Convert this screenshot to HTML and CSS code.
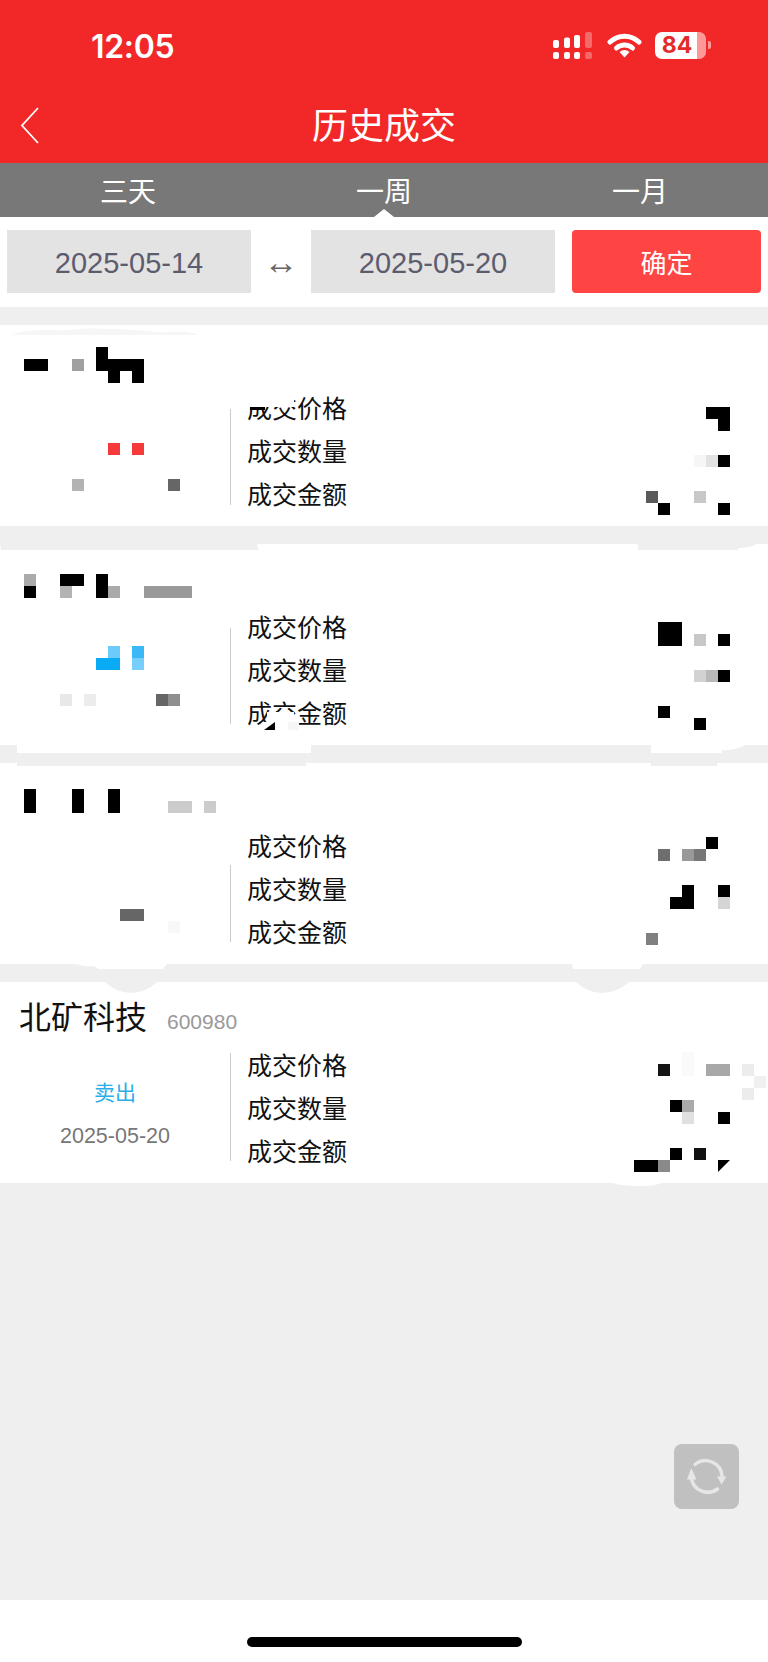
FILE: index.html
```html
<!DOCTYPE html>
<html lang="zh-CN">
<head>
<meta charset="UTF-8">
<meta name="viewport" content="width=device-width, initial-scale=1.0">
<title>历史成交</title>
<link rel="stylesheet" href="styles.css">
</head>
<body>
<div class="page">
    <header class="top">
        <div class="status">
            <span class="time">12:05</span>
            <div class="status-icons">
                <svg class="signal" width="41" height="27" viewBox="0 0 41 27">
                    <g fill="#fff">
                        <rect x="0" y="8" width="6" height="8" rx="2"/>
                        <rect x="11" y="5.500" width="6" height="10.500" rx="2"/>
                        <rect x="21" y="3" width="6" height="13" rx="2"/>
                        <rect x="0" y="20" width="6" height="7" rx="2"/>
                        <rect x="11" y="20" width="6" height="7" rx="2"/>
                        <rect x="21" y="20" width="6" height="7" rx="2"/>
                    </g>
                    <g fill="#fff" opacity="0.3">
                        <rect x="32" y="0" width="7" height="16" rx="2"/>
                        <rect x="32" y="20" width="7" height="7" rx="2"/>
                    </g>
                </svg>
                <svg class="wifi" width="35" height="26" viewBox="0 0 35 26">
                    <path d="M3 10 A21 21 0 0 1 32 10" fill="none" stroke="#fff" stroke-width="5" stroke-linecap="round"/>
                    <path d="M9.500 16 A12 12 0 0 1 25.500 16" fill="none" stroke="#fff" stroke-width="5" stroke-linecap="round"/>
                    <path d="M12.500 20 A7.500 7.500 0 0 1 22.500 20 L17.500 25.500 Z" fill="#fff"/>
                </svg>
                <div class="battery">
                    <span class="battery-num">84</span>
                </div>
            </div>
        </div>
        <div class="nav">
            <svg class="back" width="20" height="37" viewBox="0 0 20 37">
                <path d="M18 1 L2 18.500 L18 36" fill="none" stroke="#fff" stroke-width="1.800"/>
            </svg>
            <h1>历史成交</h1>
        </div>
    </header>

    <nav class="tabs">
        <a class="tab">三天</a>
        <a class="tab active">一周</a>
        <a class="tab">一月</a>
    </nav>

    <form class="range">
        <div class="date-box">2025-05-14</div>
        <span class="arrow">↔</span>
        <div class="date-box">2025-05-20</div>
        <button type="button" class="ok">确定</button>
    </form>

    <main class="list">
        <!-- record 1, name and figures are mosaicked -->
        <section class="card">
            <div class="card-title"></div>
            <div class="card-body">
                <div class="side cut"></div>
                <ul class="fields">
                    <li>成交价格</li>
                    <li>成交数量</li>
                    <li>成交金额</li>
                </ul>
            </div>
            <svg class="mosaic" width="768" height="201" viewBox="0 0 768 201">
                <path d="M12 10 Q20 5 50 5 Q70 6 85 3.500 Q120 3 150 6.500 Q165 8 175 6.500 Q190 6 198 10 Z" fill="#f6f6f6"/>
                <rect x="247" y="68" width="47" height="14" fill="#fff"/>
                <rect x="250" y="82" width="15" height="3"/>
                <rect x="24" y="34" width="24" height="12"/>
                <rect x="72" y="34" width="12" height="12" fill="#a0a0a0"/>
                <rect x="96" y="22" width="12" height="24"/>
                <rect x="108" y="34" width="36" height="12"/>
                <rect x="108" y="46" width="12" height="12"/>
                <rect x="132" y="46" width="12" height="12"/>
                <rect x="108" y="118" width="12" height="12" fill="#f63a3a"/>
                <rect x="132" y="118" width="12" height="12" fill="#f63a3a"/>
                <rect x="72" y="154" width="12" height="12" fill="#b3b3b3"/>
                <rect x="168" y="154" width="12" height="12" fill="#666"/>
                <rect x="706" y="82" width="24" height="12"/>
                <rect x="718" y="94" width="12" height="12"/>
                <rect x="694" y="130" width="12" height="12" fill="#f6f6f6"/>
                <rect x="706" y="130" width="12" height="12" fill="#e2e2e2"/>
                <rect x="718" y="130" width="12" height="12"/>
                <rect x="646" y="166" width="12" height="12" fill="#5a5a5a"/>
                <rect x="658" y="178" width="12" height="12"/>
                <rect x="694" y="166" width="12" height="12" fill="#c8c8c8"/>
                <rect x="718" y="178" width="12" height="12"/>
            </svg>
        </section>

        <section class="card">
            <div class="card-title"></div>
            <div class="card-body">
                <div class="side cut"></div>
                <ul class="fields">
                    <li>成交价格</li>
                    <li>成交数量</li>
                    <li>成交金额</li>
                </ul>
            </div>
            <svg class="mosaic" width="768" height="201" viewBox="0 0 768 201">
                <path d="M0 0 H257 L258.500 6 H1 Z" fill="#efefef"/>
                <path d="M638 0 V6 H738 V4 Q750 4 757 0 Z" fill="#efefef"/>
                <rect x="17" y="201" width="294" height="8" fill="#fff"/>
                <path d="M651 201 V209 H722 V206 Q735 207 745 201 Z" fill="#fff"/>
                <rect x="24" y="30" width="12" height="12" fill="#aaa"/>
                <rect x="24" y="42" width="12" height="12"/>
                <rect x="60" y="30" width="24" height="12"/>
                <rect x="60" y="42" width="12" height="12" fill="#b3b3b3"/>
                <rect x="96" y="30" width="12" height="24"/>
                <rect x="108" y="42" width="12" height="12" fill="#aaa"/>
                <rect x="144" y="42" width="48" height="12" fill="#999"/>
                <rect x="108" y="102" width="12" height="12" fill="#6ccbfb"/>
                <rect x="96" y="114" width="24" height="12" fill="#0aabf5"/>
                <rect x="132" y="102" width="12" height="12" fill="#3bb8f8"/>
                <rect x="132" y="114" width="12" height="12" fill="#78cefb"/>
                <rect x="60" y="150" width="12" height="12" fill="#e8e8e8"/>
                <rect x="84" y="150" width="12" height="12" fill="#ececec"/>
                <rect x="156" y="150" width="12" height="12" fill="#666"/>
                <rect x="168" y="150" width="12" height="12" fill="#8f8f8f"/>
                <rect x="658" y="78" width="24" height="24"/>
                <rect x="694" y="90" width="12" height="12" fill="#c8c8c8"/>
                <rect x="718" y="90" width="12" height="12"/>
                <rect x="694" y="126" width="12" height="12" fill="#d2d2d2"/>
                <rect x="706" y="126" width="12" height="12" fill="#b8b8b8"/>
                <rect x="718" y="126" width="12" height="12"/>
                <rect x="658" y="162" width="12" height="12"/>
                <rect x="694" y="174" width="12" height="12"/>
                <rect x="267" y="168" width="27" height="10" fill="#fff"/>
                <rect x="262" y="178" width="32" height="8" fill="#fff"/>
                <path d="M264 186 L275 186 L275 178 Z"/>
                <rect x="288" y="178" width="11" height="8" fill="#f6f6f6"/>
            </svg>
        </section>

        <section class="card">
            <div class="card-title"></div>
            <div class="card-body">
                <div class="side short"></div>
                <ul class="fields">
                    <li>成交价格</li>
                    <li>成交数量</li>
                    <li>成交金额</li>
                </ul>
            </div>
            <svg class="mosaic" width="768" height="201" viewBox="0 0 768 201">
                <rect x="17" y="0" width="289" height="3" fill="#efefef"/>
                <rect x="651" y="0" width="66" height="3" fill="#efefef"/>
                <path d="M76 201 Q85 204 94 203 L98 206 H163 L167 201 Z" fill="#fff"/>
                <path d="M572 201 L573 206 H640 L643 201 Z" fill="#fff"/>
                <rect x="24" y="26" width="12" height="24"/>
                <rect x="72" y="26" width="12" height="24"/>
                <rect x="108" y="26" width="12" height="24"/>
                <rect x="168" y="38" width="24" height="12" fill="#ccc"/>
                <rect x="204" y="38" width="12" height="12" fill="#ccc"/>
                <rect x="120" y="146" width="24" height="12" fill="#666"/>
                <rect x="168" y="158" width="12" height="12" fill="#f8f8f8"/>
                <rect x="706" y="74" width="12" height="12"/>
                <rect x="658" y="86" width="12" height="12" fill="#6e6e6e"/>
                <rect x="682" y="86" width="12" height="12" fill="#999"/>
                <rect x="694" y="86" width="12" height="12" fill="#777"/>
                <rect x="682" y="122" width="12" height="24"/>
                <rect x="670" y="134" width="12" height="12"/>
                <rect x="718" y="122" width="12" height="12"/>
                <rect x="718" y="134" width="12" height="12" fill="#d5d5d5"/>
                <rect x="646" y="170" width="12" height="12" fill="#808080"/>
            </svg>
        </section>

        <section class="card">
            <div class="card-title">
                <span class="stock-name">北矿科技</span>
                <span class="stock-code">600980</span>
            </div>
            <div class="card-body">
                <div class="side">
                    <span class="sell">卖出</span>
                    <span class="deal-date">2025-05-20</span>
                </div>
                <ul class="fields">
                    <li>成交价格</li>
                    <li>成交数量</li>
                    <li>成交金额</li>
                </ul>
            </div>
            <svg class="mosaic" width="768" height="201" viewBox="0 0 768 201">
                <path d="M105 0 Q117 11 131 11 Q145 11 157 0 Z" fill="#efefef"/>
                <path d="M576 0 Q588 11 602 11 Q617 11 629 0 Z" fill="#efefef"/>
                <path d="M613 201 Q620 204 640 204 Q655 204 662 201 Z" fill="#fff"/>
                <rect x="658" y="82" width="12" height="12" fill="#151515"/>
                <rect x="706" y="82" width="24" height="12" fill="#a8a8a8"/>
                <rect x="742" y="82" width="12" height="12" fill="#ececec"/>
                <rect x="682" y="70" width="12" height="24" fill="#fafafa"/>
                <rect x="754" y="94" width="12" height="12" fill="#f0f0f0"/>
                <rect x="742" y="106" width="12" height="12" fill="#ececec"/>
                <rect x="670" y="118" width="12" height="12"/>
                <rect x="682" y="118" width="12" height="12" fill="#aaa"/>
                <rect x="682" y="130" width="12" height="12" fill="#e0e0e0"/>
                <rect x="718" y="130" width="12" height="12"/>
                <rect x="670" y="166" width="12" height="12"/>
                <rect x="694" y="166" width="12" height="12" fill="#111"/>
                <rect x="634" y="178" width="24" height="12"/>
                <rect x="658" y="178" width="12" height="12" fill="#8a8a8a"/>
                <path d="M718 178 L730 178 L718 190 Z"/>
            </svg>
        </section>
    </main>

    <div class="refresh">
        <svg width="65" height="65" viewBox="0 0 65 65">
            <path d="M17.500 35 A16.500 16.500 0 0 0 43.500 45" fill="none" stroke="#e6e6e6" stroke-width="3.500" stroke-linecap="round"/>
            <path d="M21 20.500 A16.500 16.500 0 0 1 48 32" fill="none" stroke="#e6e6e6" stroke-width="3.500" stroke-linecap="round"/>
            <path d="M17.300 24 L13 35.500 L22.500 35.500 Z" fill="#e6e6e6"/>
            <path d="M43 32.500 L52.500 32.500 L47.500 40.500 Z" fill="#e6e6e6"/>
        </svg>
    </div>

    <footer class="home"><span class="home-bar"></span></footer>
</div>
</body>
</html>
```

FILE: styles.css
```css
* {
    box-sizing: border-box;
}

body {
    margin: 0;
    padding: 0;
    font-family: "Liberation Sans", "Noto Sans CJK SC", sans-serif;
    background-color: #fff;
}

.page {
    position: relative;
    width: 768px;
    height: 1662px;
    overflow: hidden;
    display: flex;
    flex-direction: column;
    background-color: #efefef;
}

.top {
    height: 163px;
    background-color: #f22828;
    color: #fff;
}

.status {
    height: 90px;
    padding: 32px 62px 0 91px;
    display: flex;
    justify-content: space-between;
    align-items: flex-start;
}

.time {
    font-family: Inter, sans-serif;
    font-size: 32px;
    line-height: 30px;
    font-weight: 600;
    letter-spacing: -0.3px;
}

.status-icons {
    display: flex;
    align-items: flex-start;
    gap: 13px;
}

.battery {
    position: relative;
    width: 51px;
    height: 27px;
    border-radius: 7px;
    background: linear-gradient(to right, #fff 82%, #f99 82%);
    text-align: center;
}

.battery::after {
    content: "";
    position: absolute;
    right: -5px;
    top: 9px;
    width: 3px;
    height: 8px;
    border-radius: 0 2px 2px 0;
    background-color: #f99;
}

.battery-num {
    display: block;
    padding-right: 7px;
    color: #e32b2b;
    font-family: Inter, sans-serif;
    font-size: 23px;
    line-height: 27px;
    font-weight: 700;
}

.nav {
    position: relative;
    height: 73px;
    display: flex;
    justify-content: center;
    align-items: center;
}

.back {
    position: absolute;
    left: 20px;
    top: 17px;
}

.nav h1 {
    margin: 0;
    font-size: 36px;
    font-weight: 400;
    line-height: 44px;
}

.tabs {
    height: 54px;
    display: grid;
    grid-template-columns: repeat(3, 1fr);
    background-color: #787878;
}

.tab {
    position: relative;
    height: 54px;
    text-align: center;
    color: #fff;
    font-size: 28px;
    line-height: 60px;
}

.tab.active::after {
    content: "";
    position: absolute;
    left: 50%;
    bottom: 0;
    margin-left: -10px;
    border-left: 10px solid transparent;
    border-right: 10px solid transparent;
    border-bottom: 8px solid #fff;
}

.range {
    height: 90px;
    padding: 13px 7px 14px;
    display: flex;
    align-items: stretch;
    background-color: #fff;
}

.date-box {
    width: 244px;
    background-color: #e3e3e3;
    color: #5c5c6e;
    font-size: 29px;
    line-height: 67px;
    text-align: center;
}

.arrow {
    width: 60px;
    text-align: center;
    color: #666;
    font-size: 35px;
    line-height: 64px;
}

.ok {
    width: 189px;
    margin-left: 17px;
    padding: 0;
    border: none;
    border-radius: 4px;
    background-color: #ff4444;
    color: #fff;
    font-family: inherit;
    font-size: 26px;
}

.list {
    margin-top: 18px;
    display: flex;
    flex-direction: column;
    gap: 18px;
}

.card {
    position: relative;
    height: 201px;
    background-color: #fff;
}

.card-title {
    height: 63px;
    padding: 16px 0 0 19px;
    display: flex;
    align-items: baseline;
    gap: 20px;
}

.stock-name {
    color: #111;
    font-size: 32px;
    line-height: 40px;
}

.stock-code {
    color: #999;
    font-size: 21px;
}

.card-body {
    display: flex;
    align-items: flex-start;
}

.side {
    width: 231px;
    height: 108px;
    margin-top: 8px;
    border-right: 1px solid #ccc;
    display: flex;
    flex-direction: column;
    align-items: center;
    padding-top: 26px;
}

.side.cut {
    height: 96px;
    margin-top: 21px;
}

.side.short {
    height: 77px;
    margin-top: 39px;
}

.sell {
    color: #2aaee8;
    font-size: 21px;
    line-height: 28px;
}

.deal-date {
    margin-top: 15px;
    color: #777;
    font-size: 21.5px;
    line-height: 28px;
}

.fields {
    margin: 0;
    padding: 0 0 0 16px;
    list-style: none;
    color: #111;
    font-size: 25px;
    line-height: 43px;
}

.mosaic {
    position: absolute;
    left: 0;
    top: 0;
    overflow: visible;
}

.refresh {
    position: absolute;
    left: 674px;
    top: 1444px;
    width: 65px;
    height: 65px;
    border-radius: 8px;
    background-color: #c0c0c0;
}

.refresh svg {
    display: block;
}

.home {
    position: absolute;
    left: 0;
    right: 0;
    top: 1600px;
    height: 62px;
    background-color: #fff;
}

.home-bar {
    position: absolute;
    left: 247px;
    top: 37px;
    width: 275px;
    height: 10px;
    border-radius: 5px;
    background-color: #000;
}
```
